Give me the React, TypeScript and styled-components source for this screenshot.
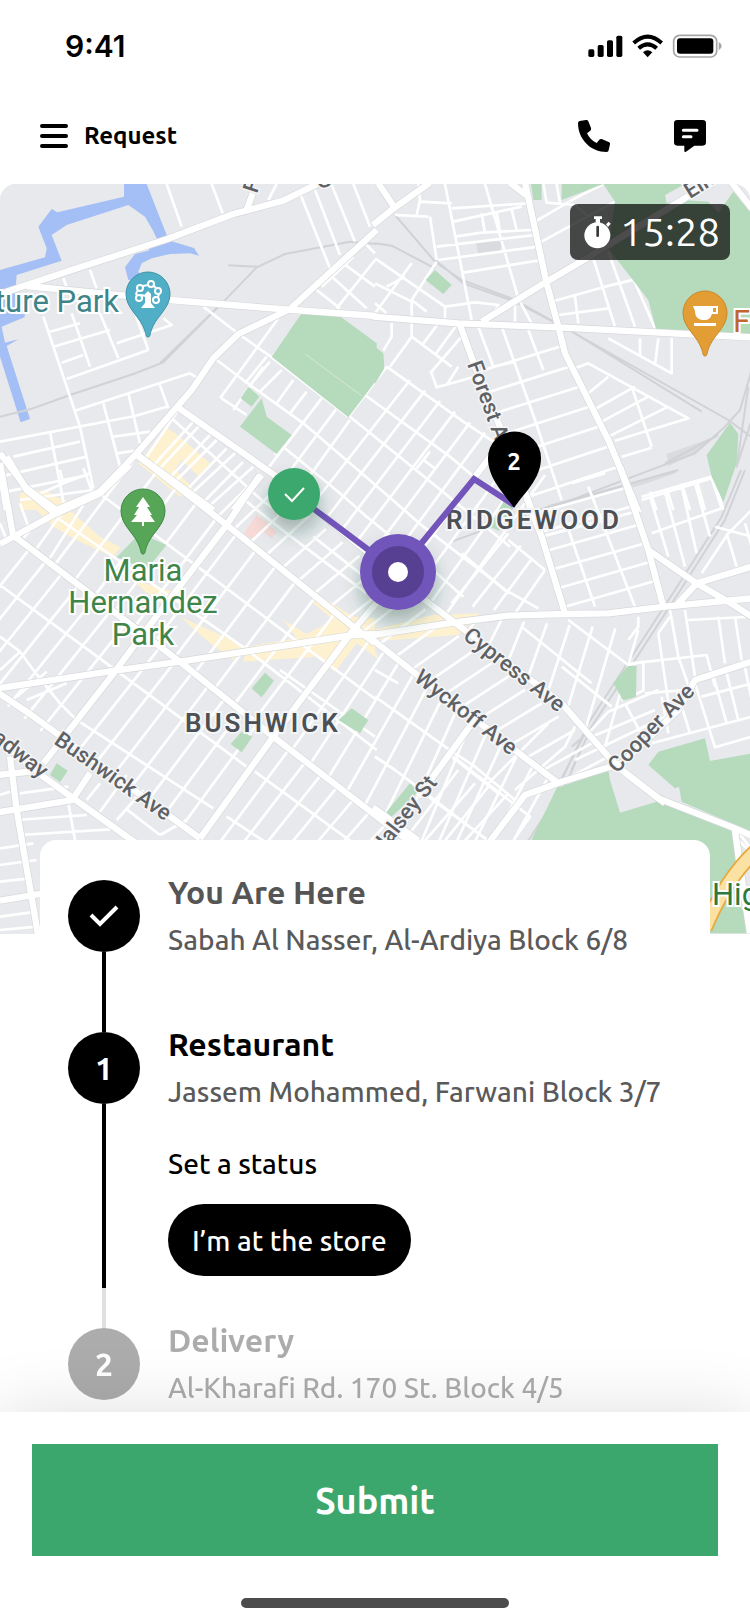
import React from 'react';
import styled, { createGlobalStyle } from 'styled-components';

const uiFont = '"Ubuntu", "Noto Sans", sans-serif';
const mapFont = 'Roboto, "Liberation Sans", sans-serif';

const weight = { text: 500, strong: 600 };

const GlobalStyle = createGlobalStyle`
  *, *::before, *::after { box-sizing: border-box; }
  body { margin: 0; background: #fff; color: #000; font-family: ${uiFont}; font-weight: ${weight.text}; }
  h2, p, ol { margin: 0; padding: 0; }
  button { border: 0; padding: 0; font-family: inherit; cursor: pointer; }
`;

/* ---------- page frame ---------- */

const Page = styled.div`
  display: flex;
  flex-direction: column;
  min-height: 100vh;
`;

const StatusBar = styled.div`
  display: flex;
  align-items: center;
  justify-content: space-between;
  height: 88px;
  padding: 4px 28px 0 65px;
`;

const Clock = styled.time`
  font: 600 30px/36px Inter, sans-serif;
`;

const Toolbar = styled.header`
  display: flex;
  align-items: center;
  height: 96px;
  padding: 0 44px 0 40px;
`;

const MenuButton = styled.button`
  display: flex;
  align-items: center;
  gap: 16px;
  margin-right: auto;
  background: none;
  color: #000;
  font-size: 24px;
  font-weight: ${weight.strong};
  line-height: 32px;
`;

const ToolbarActions = styled.div`
  display: flex;
  gap: 64px;
`;

const IconButton = styled.button`
  display: flex;
  background: none;
  color: #000;
`;

const Main = styled.main`
  flex: 1;
`;

/* ---------- map ---------- */

const MapPanel = styled.section`
  position: relative;
  height: 750px;
  border-radius: 16px 16px 0 0;
  overflow: hidden;
  background: #e7e9ec;
`;

const MapCanvas = styled.svg`
  display: block;
  width: 100%;
  height: 100%;
`;

const Timer = styled.div`
  position: absolute;
  top: 20px;
  right: 20px;
  display: flex;
  align-items: center;
  justify-content: center;
  gap: 8px;
  width: 160px;
  height: 56px;
  padding-left: 4px;
  border-radius: 8px;
  background: rgba(0, 0, 0, 0.7);
  color: #fff;
  font-size: 40px;
  font-weight: 400;
  line-height: 56px;
`;

const StreetLabel = styled.text`
  font: 500 22px ${mapFont};
  fill: #5f6164;
  stroke: #f4f5f6;
  stroke-width: 3px;
  paint-order: stroke;
`;

const DistrictLabel = styled.text`
  font: 600 26px ${mapFont};
  letter-spacing: 3px;
  fill: #4c4f53;
  stroke: #f4f5f6;
  stroke-width: 4px;
  paint-order: stroke;
`;

const PlaceLabel = styled.text<{ $color: string }>`
  font: 400 31px ${mapFont};
  fill: ${(p) => p.$color};
  stroke: #fff;
  stroke-width: 4px;
  paint-order: stroke;
`;

const PinNumber = styled.text`
  font: ${weight.strong} 24px ${uiFont};
  fill: #fff;
`;

type Edge = [number, number, number, number];

/** Parallel side streets that run from one avenue to the next. */
function ladder(a: Edge, b: Edge, count: number): string {
  let d = '';
  for (let i = 0; i <= count; i++) {
    const t = i / count;
    const x1 = Math.round(a[0] + (a[2] - a[0]) * t);
    const y1 = Math.round(a[1] + (a[3] - a[1]) * t);
    const x2 = Math.round(b[0] + (b[2] - b[0]) * t);
    const y2 = Math.round(b[1] + (b[3] - b[1]) * t);
    d += `M${x1},${y1}L${x2},${y2}`;
  }
  return d;
}

interface Tile {
  x: number;
  y: number;
  water?: string;
  parks?: string;
  shops?: string;
  clinic?: string;
  yard?: string;
  rail?: string;
  minor: string;
  major: string;
}

/* Terrain is stored at three units per pixel, one entry per map tile. */
const tiles: Tile[] = [
  {
    x: 0,
    y: -12,
    water:
      'M372,12H440L500,165 510,182 582,204 597,227 570,220 510,222 455,235 425,250 415,275 430,300 385,300 375,262 405,222 445,212 470,175 458,150 435,110 385,75 200,135 155,165 185,242 50,285 45,345 75,405 73,412 5,440 15,488 55,478 20,498 90,717 62,727 0,530V270L135,232 140,205 115,140 155,87 172,97 372,50Z',
    parks:
      'M905,400 1015,405 1130,490V600L1045,712 815,530ZM745,620 778,650 755,680 722,655ZM785,655 800,710 875,765 830,822 720,740Z',
    shops: 'M500,742 540,770 630,850 597,890 545,840 525,868 580,925 540,950 415,850ZM60,940 110,930 220,970 200,990H60Z',
    rail: 'M0,710 90,688 210,645 400,582 490,547 680,355 770,262 855,222 1050,185 1130,192M685,256 770,260M480,550 660,375',
    minor:
      'M500,12 545,140M635,12 668,100M805,60 830,12M900,40 990,265M945,30 1020,225M995,15 1065,185M1060,12 1110,140' +
      'M130,410 240,740 280,925M190,295 200,320M270,270 290,325M215,400 270,560M300,400 355,535M405,400 445,510' +
      'M150,455 240,430M160,500 330,450M185,548 250,525M200,597 445,510M350,490 515,435 490,415' +
      'M225,692 570,580 590,592M0,785 405,708 500,680M310,670 360,860M385,640 420,790M478,610 505,685M340,770 450,755M350,820 420,810' +
      'M150,755 195,990M40,830 240,785M0,890 260,830M20,935 265,885M60,960 280,930' +
      'M610,380 720,465 820,535 1045,710M650,540 750,615M665,655 740,705' +
      'M660,655 835,415M815,535 905,410M700,690 790,560M735,610 800,530M825,825 850,790' +
      'M440,830 535,690M480,865 600,735M530,900 650,780M575,940 705,820M620,985 760,860M515,715 790,965 830,990' +
      'M1030,250 1125,320M990,285 1100,385M950,330 1020,385M1010,385 1125,240M965,320 1060,230M1095,190 1125,220',
    major:
      'M0,342 60,322 240,262 500,178 700,102 850,62 955,10M80,318 250,335 510,360 840,387 1130,408M1130,150 1070,205 1000,268 870,387 715,462 640,535 575,630 410,820 300,935 170,990' +
      'M530,680 830,890 880,930M405,820 640,990M0,820 80,925 170,990M0,870 20,990M785,885 700,990M740,90 758,40',
  },
  {
    x: 1125,
    y: -12,
    parks:
      'M468,12H500V60H475ZM560,12H930L870,45 875,70 920,60 1000,65 1030,98 1075,35 1125,95V462L843,447 820,360 700,205 720,65 685,12 560,60ZM180,270 230,315 205,342 152,300ZM0,500 25,520 28,565 0,612ZM1065,728 1090,762 1085,850 1045,965 1010,890 995,825Z',
    yard: 'M875,822 1025,768 960,820 880,858ZM300,180 380,185 375,215 310,220Z',
    rail:
      'M60,105 180,245 260,300 410,355 600,460 980,695M180,240 265,310 420,365 590,455 1060,720 1130,772M0,190 50,197 180,265M1130,570 1095,690 1050,740 960,820 800,880 550,975M1120,620 1085,860 1130,720M870,850 1030,765',
    minor:
      'M130,12 135,60 125,105M60,105 160,110M135,65 230,70M165,110 185,240M210,12 290,420M330,12 430,355 475,440M230,85 460,70M235,125 440,80M240,170 320,158 470,150M185,200 480,165M190,240 490,200M265,278 500,240M320,100 330,160M365,95 375,155M410,90 425,150' +
      'M505,12 515,68 600,75M545,12 555,70M480,125 600,55 685,12M490,190 720,65M0,235 210,380 300,367 370,375 350,410M110,360 185,245M35,320 90,290M0,310 110,365 110,430M210,380V415M0,400 110,250M0,370 35,400M110,360 155,395M420,360V425' +
      'M540,362 690,320 780,298M600,350 610,430M550,405 700,385M655,235 720,440M700,215 780,440M735,205 840,445M600,75 640,110' +
      'M25,512 50,470V430M110,430V470L230,560M110,470 45,560M180,525 245,435M145,490 190,430M165,580 260,470M170,580 185,622 300,590M215,615 250,560' +
      'M310,440 355,560 420,545M380,440 480,720 560,960M460,450 505,570M770,620 830,800M690,880 590,910' +
      ladder([310, 575, 460, 950], [570, 495, 730, 860], 6) +
      'M600,565 640,550 940,715 720,782M640,640 700,590M655,690 780,620M670,730 820,650M690,775 875,682M740,830 830,803' +
      'M700,475 890,580V475M795,475V525M850,475 840,555M800,950 1015,888 1045,990M825,935 845,990M875,925 895,990M920,910 945,990M965,900 990,990',
    major:
      'M-6,135 60,82 165,8M10,10 60,85M405,8 460,50M450,8 515,310 550,440 570,520 700,780 790,995M-6,410 250,430 550,442 1130,472M320,425 515,305 640,232 950,42 1015,8M255,435 300,560 400,800 470,990M1070,8 1130,85M300,890 350,825 420,770',
  },
  {
    x: 750,
    y: 528,
    minor:
      'M0,75 160,190 330,335 520,500 780,700M105,265 270,400 350,470 560,640 640,710M300,170 560,380 780,560M345,105 600,290 780,440M410,20 640,185 730,245M190,530 330,640 420,700' +
      'M0,75 60,5M30,95 95,30M80,130 130,60M120,160 170,95M295,170 410,20M520,300 555,325M540,275 500,325' +
      ladder([50, 330, 140, 402], [215, 115, 300, 180], 2) +
      ladder([185, 438, 590, 760], [480, 60, 885, 345], 9),
    major: '',
  },
  {
    x: 0,
    y: 858,
    parks:
      'M420,190 500,225 440,300 350,262ZM795,608 822,632 785,682 755,655ZM725,785 757,800 725,847 692,822ZM1055,715 1105,750 1080,790 1015,750ZM170,880 203,902 180,937 150,915Z',
    shops:
      'M60,70 140,60 300,200 362,232 340,262 240,215 160,170ZM400,330 520,365 480,400 430,360ZM540,440 740,530 700,570 630,520ZM850,450 920,492 1000,450 940,400 960,378 1060,440 1125,445V560L1070,520 1005,605 950,560 730,575 740,530 890,505Z',
    clinic: 'M770,135 805,160 830,185 815,205 790,185 760,212 732,190Z',
    minor:
      'M160,135 735,535 1130,840M305,75 900,520 1130,690M0,345 340,595 740,890M0,500 60,545 100,600 180,700 240,760M0,600 60,545M80,690 200,640M50,680 140,605M60,215 115,155M100,250 185,130M140,280 250,105M190,40 180,0M100,80 190,40 270,10M0,160 20,210M250,-5 275,60M60,100 85,170M740,95 860,190 1100,370M840,600 1125,800' +
      ladder([160, 290, 820, 800], [407, -37, 1067, 473], 11) +
      ladder([-170, 560, 170, 820], [90, 235, 430, 495], 7) +
      ladder([170, 820, 600, 1105], [430, 495, 820, 800], 8) +
      ladder([600, 1105, 1000, 1400], [820, 800, 1255, 1137], 9) +
      ladder([410, -50, 1675, 940], [530, -185, 1825, 860], 26) +
      ladder([820, 800, 1255, 1137], [1067, 473, 1420, 740], 8) +
      ladder([1255, 1137, 1465, 1250], [1420, 740, 1640, 930], 5),
    major:
      'M0,222 160,135 300,70 390,-15M20,-40 80,60 165,130M0,-20 40,200M45,200 480,530 540,575 820,800 1125,1035 1260,1140M405,-50 680,165 1060,470 1125,520M780,15 680,165 400,530 345,605 130,880M-6,655 345,602 540,575 1060,495 1130,492M-6,668 90,732 170,790 600,1105M1270,235 1060,480 820,800 600,1105M830,20 1275,390',
  },
  {
    x: 1125,
    y: 858,
    parks:
      'M758,588H785L783,680 745,692 715,640ZM1015,0H1077L1045,95ZM385,95 415,115 372,182 345,170Z',
    shops: 'M0,480 170,435 315,430 250,495 20,512ZM0,540 15,575 0,560Z',
    yard: 'M520,105 800,30 900,0 905,8 800,45 530,118Z',
    rail: 'M1098,0 1040,140 900,360 640,760 560,930M1110,0 1050,150 910,370 650,770 590,900M230,215 520,110 910,0M630,790 560,925M660,770 590,830',
    minor:
      'M400,210 510,300M400,365 490,415M260,250 400,370' +
      ladder([230, 400, 420, 430], [400, 190, 510, 300], 3) +
      'M500,200 800,120M560,120 660,410M640,50 780,410' +
      ladder([480, 130, 570, 410], [765, 50, 850, 330], 5) +
      ladder([280, 480, 690, 830], [310, 445, 790, 480], 7) +
      'M580,450 760,585 805,575M560,590 710,710M440,470 650,640M790,440V470L760,510' +
      'M825,80 880,260M870,65 930,290M920,50 965,250M960,40 1005,200M800,90 1010,25 1040,115 830,190M1020,170 1130,200M1060,190 980,310M1055,190 1085,290M1110,160 1130,230M1060,190 1130,120' +
      'M885,420 910,560 945,660M930,420 960,620M850,490 885,730M850,490 885,440M940,450 1130,440M1030,440 1050,580M1080,440 1100,570M770,580 995,555 1020,650M805,580V662L740,692M810,670 930,660M640,790 700,725 850,660' +
      'M600,870 880,735M650,800 840,720M750,700 795,785M860,680 880,790M905,660 945,790M960,640 1020,832 1130,800M1010,600 1055,760M1050,590 1090,750M980,680 1130,640M830,820 1130,740M1105,570 1130,690' +
      'M0,680 210,830 300,890 420,990M0,860 60,900M230,860 370,970M0,600 70,640M340,940 520,760M420,960 570,830 600,770',
    major:
      'M-6,495 240,457 400,437 570,432 700,430 870,410 1130,385M150,390 560,700 700,860 740,900 870,1000M-6,510 120,610 550,940M455,85 500,200 570,430M735,-10 820,240 865,410M820,240 965,340 1060,395 1130,440M905,405 965,340 1130,290' +
      'M1130,575 960,630 910,720 740,880 560,935 450,975 340,1120M295,755 130,980',
  },
  {
    x: 0,
    y: 1608,
    minor:
      'M60,220 205,200M60,345 330,328M50,300 260,285M0,385 100,370M0,435 110,420M0,485 90,475M0,590 110,575M0,630 110,620M205,250 225,360M0,225 30,215M300,275 380,165M350,300 430,210M380,268 480,345M230,0 640,265M680,290 790,362M765,155 1050,362M480,345 560,300M260,240 300,190',
    major: 'M30,110 50,270 115,650M-6,165 90,155M-6,277 220,240M220,235 270,160M-20,45 130,170 220,235 430,385M0,542 130,520',
  },
  {
    x: 1125,
    y: 1608,
    parks:
      'M990,55 1005,123 1130,100V335L920,245 912,200 900,205 820,135 850,95ZM545,205 700,150 705,180 735,278 845,245 1070,325 1130,640H900V400H450ZM105,190 130,215 45,295 35,275Z',
    rail: 'M560,180 520,270 460,362M600,130 530,290 480,362',
    minor:
      'M0,110 60,150 330,355M235,110 465,290 420,355M160,230 340,362M100,345 250,150M150,362 300,190M210,362 340,200M270,362 400,220M1090,360 1130,400M1085,330 1130,390',
    major: 'M-6,262 130,362M740,150 850,235 1080,325 1130,347M1080,330 1092,420 1125,640',
  },
];

const layer = (key: keyof Tile) =>
  tiles.map((t) => (t[key] ? <path key={`${t.x}-${t.y}`} transform={`translate(${t.x} ${t.y})`} d={t[key] as string} /> : null));

const Terrain = () => (
  <g transform="scale(0.33333)" strokeLinejoin="round">
    <rect width="2250" height="2250" fill="#e7e9ec" />
    <g fill="#fdf1d0">{layer('shops')}</g>
    <g fill="#f7d9d6">{layer('clinic')}</g>
    <g fill="#d9dbdf">{layer('yard')}</g>
    <g fill="#a4bff5">{layer('water')}</g>
    <g fill="none" stroke="#d0d2d5" strokeWidth="6">{layer('rail')}</g>
    <g fill="none" stroke="#fff" strokeWidth="8">{layer('minor')}</g>
    <g fill="#b5dabc">{layer('parks')}</g>
    <g fill="none" stroke="#d6d8db" strokeWidth="23">{layer('major')}</g>
    <g fill="none" stroke="#fff" strokeWidth="19">{layer('major')}</g>
    <path d="M915,510 1085,635" stroke="#cde3d1" strokeWidth="4" />
    <g fill="none" transform="translate(1125 1608)">
      <path d="M990,625Q1050,480 1140,395" stroke="#e8a93f" strokeWidth="46" />
      <path d="M990,625Q1050,480 1140,395" stroke="#fbe1a2" strokeWidth="36" />
    </g>
  </g>
);

const pinPath = 'M0,43C-2,43 -2,41 -3,37C-7,23 -22,15 -22,0A22,22 0 0 1 22,0C22,15 7,23 3,37C2,41 2,43 0,43Z';

interface PoiProps {
  x: number;
  y: number;
  fill: string;
  edge: string;
  children: React.ReactNode;
}

const Poi = ({ x, y, fill, edge, children }: PoiProps) => (
  <g transform={`translate(${x} ${y})`}>
    <path d={pinPath} fill={fill} stroke={edge} strokeWidth="1" />
    {children}
  </g>
);

const RouteMap = () => (
  <MapCanvas viewBox="0 0 750 750" preserveAspectRatio="xMidYMid slice" role="img" aria-label="Route map">
    <defs>
      <filter id="markerShadow" x="-60%" y="-60%" width="220%" height="240%">
        <feDropShadow dx="0" dy="12" stdDeviation="9" floodColor="#1d4f3d" floodOpacity="0.35" />
      </filter>
    </defs>
    <Terrain />

    <StreetLabel transform="translate(467 180) rotate(70)">Forest Ave</StreetLabel>
    <StreetLabel transform="translate(413 496) rotate(38)">Wyckoff Ave</StreetLabel>
    <StreetLabel transform="translate(462 454) rotate(38)">Cypress Ave</StreetLabel>
    <StreetLabel transform="translate(617 590) rotate(-46)">Cooper Ave</StreetLabel>
    <StreetLabel transform="translate(438 599) rotate(-52)" textAnchor="end">Halsey St</StreetLabel>
    <StreetLabel transform="translate(53 559) rotate(35)">Bushwick Ave</StreetLabel>
    <StreetLabel transform="translate(41 595) rotate(38)" textAnchor="end">Broadway</StreetLabel>
    <StreetLabel transform="translate(690 15) rotate(-32)">Eliot</StreetLabel>
    <StreetLabel transform="translate(257 10) rotate(-72)">F</StreetLabel>
    <StreetLabel transform="translate(318 5) rotate(-14)">G</StreetLabel>
    <DistrictLabel x="185" y="548">BUSHWICK</DistrictLabel>
    <DistrictLabel x="446" y="345">RIDGEWOOD</DistrictLabel>

    <PlaceLabel $color="#3f8488" x="119" y="128" textAnchor="end">Nature Park</PlaceLabel>
    <PlaceLabel $color="#3f8549" textAnchor="middle">
      <tspan x="143" y="397">Maria</tspan>
      <tspan x="143" y="429">Hernandez</tspan>
      <tspan x="143" y="461">Park</tspan>
    </PlaceLabel>
    <PlaceLabel $color="#c0672f" x="733" y="148">F</PlaceLabel>
    <PlaceLabel $color="#2d7a3d" x="712" y="721">High</PlaceLabel>

    <Poi x={148} y={110} fill="#50afc6" edge="#3e93a8">
      <g fill="none" stroke="#fff" strokeWidth="2">
        <circle cx="-9" cy="4" r="3" />
        <circle cx="-8" cy="-6" r="3" />
        <circle cx="3" cy="-10" r="3" />
        <circle cx="10" cy="-3" r="3" />
        <circle cx="8" cy="6" r="3" />
        <path d="M-12,1 -11,-3M-5,-8 0,-9M6,-8 8,-6M11,0 10,3M-7,1 -2,2" />
      </g>
      <path d="M-3,0 0,-3 3,0V9L7,14H-7L-3,9Z" fill="#fff" />
    </Poi>
    <Poi x={143} y={327} fill="#57a657" edge="#418744">
      <path d="M0,-14 7,-4H4L9,4H7L12,11H1V15H-1V11H-12L-6,4H-9L-4,-4H-7Z" fill="#fff" />
    </Poi>
    <Poi x={705} y={129} fill="#e39d35" edge="#cb872b">
      <path d="M-12,-7H13V1H7Q5,7 0,7H-3Q-10,6 -10,-2ZM8,-5V-1H11V-5ZM-11,10H11V13H-11Z" fill="#fff" fillRule="evenodd" />
    </Poi>

    <path d="M294,310 398,388 474,295 514,321" fill="none" stroke="#7254ba" strokeWidth="6" />
    <g filter="url(#markerShadow)">
      <circle cx="294" cy="310" r="26" fill="#3ca86d" />
      <circle cx="398" cy="388" r="38" fill="#7254ba" />
    </g>
    <path d="M285,310 292,317 304,304" fill="none" stroke="#fff" strokeWidth="2" />
    <circle cx="398" cy="388" r="26" fill="#573f91" />
    <circle cx="398" cy="388" r="10" fill="#fff" />
    <path d="M514,324C504,309 488,295 488,274A26,26 0 0 1 541,274C541,295 524,309 514,324Z" />
    <PinNumber x="514" y="286" textAnchor="middle">2</PinNumber>
  </MapCanvas>
);

/* ---------- icons ---------- */

const StatusIcons = () => (
  <svg width="134" height="24" viewBox="638 101 402 72" aria-hidden="true">
    <rect x="639" y="147" width="18" height="23" rx="5" />
    <rect x="667" y="134" width="18" height="36" rx="5" />
    <rect x="695" y="120" width="18" height="50" rx="5" />
    <rect x="723" y="106" width="18" height="64" rx="5" />
    <g fill="none" stroke="#000" strokeWidth="12">
      <path d="M775,128Q817,90 859,128" />
      <path d="M790,144Q817,120 844,144" />
    </g>
    <path d="M803,156Q817,143 831,156L817,171Z" />
    <rect x="895" y="105" width="129" height="65" rx="18" fill="none" stroke="#a6a6a6" strokeWidth="5" />
    <rect x="905" y="114" width="109" height="46" rx="9" />
    <path d="M1030,125Q1039,129 1039,137T1030,150Z" fill="#a6a6a6" />
  </svg>
);

const MenuIcon = () => (
  <svg width="28" height="24" viewBox="0 0 28 24" aria-hidden="true">
    <path d="M2,2H26M2,12H26M2,22H26" stroke="#000" strokeWidth="4" strokeLinecap="round" />
  </svg>
);

const PhoneIcon = () => (
  <svg width="32" height="32" viewBox="0 0 96 96" aria-hidden="true">
    <path d="M5,3 24,0Q29,-1 31,4L39,24Q40,29 37,32L27,40C33,53 43,63 56,69L64,59Q67,56 71,57L92,66Q97,68 96,73L92,91Q91,96 86,96C38,96 0,58 0,9Q0,4 5,3Z" />
  </svg>
);

const ChatIcon = () => (
  <svg width="32" height="32" viewBox="0 0 96 96" aria-hidden="true">
    <path d="M10,0H86Q96,0 96,10V67Q96,77 86,77H61L36,95Q31,98 31,92V77H10Q0,77 0,67V10Q0,0 10,0Z" />
    <path d="M28,31H69M28,50H51" stroke="#fff" strokeWidth="9" strokeLinecap="round" />
  </svg>
);

const StopwatchIcon = () => (
  <svg width="28" height="34" viewBox="0 0 84 102" aria-hidden="true">
    <circle cx="40" cy="61" r="39" fill="#fff" />
    <path d="M30,4H54V12H48V26H35V12H30ZM66,28 74,20 80,26 72,36Z" fill="#fff" />
    <path d="M41,36V62" stroke="#333b35" strokeWidth="8" strokeLinecap="round" />
  </svg>
);

const CheckIcon = () => (
  <svg width="32" height="24" viewBox="0 0 32 24" aria-hidden="true">
    <path d="M3,11 12,20 29,3" fill="none" stroke="#fff" strokeWidth="4" />
  </svg>
);

/* ---------- delivery steps ---------- */

const Sheet = styled.section`
  position: relative;
  margin: -94px 40px 0;
  padding: 40px 28px 4px;
  border-radius: 16px 16px 0 0;
  background: #fff;
`;

const Steps = styled.ol`
  list-style: none;
`;

const Step = styled.li<{ $muted?: boolean }>`
  display: grid;
  grid-template-columns: 72px 1fr;
  column-gap: 28px;
  opacity: ${(p) => (p.$muted ? 0.32 : 1)};
`;

const Track = styled.div`
  display: flex;
  flex-direction: column;
  align-items: center;
`;

const Marker = styled.span`
  display: flex;
  align-items: center;
  justify-content: center;
  width: 72px;
  height: 72px;
  border-radius: 50%;
  background: #000;
  color: #fff;
  font-size: 32px;
  font-weight: ${weight.strong};
`;

const Connector = styled.span<{ $pending?: boolean }>`
  flex: ${(p) => (p.$pending ? '0 0 40px' : '1')};
  width: 4px;
  background: ${(p) => (p.$pending ? '#e0e0e0' : '#000')};
`;

const StepBody = styled.div<{ $gap: number }>`
  margin-top: -4px;
  padding-bottom: ${(p) => p.$gap}px;
`;

const StepTitle = styled.h2<{ $color?: string }>`
  color: ${(p) => p.$color || '#000'};
  font-size: 32px;
  font-weight: ${weight.strong};
  line-height: 32px;
`;

const Address = styled.p<{ $color?: string }>`
  margin-top: 12px;
  color: ${(p) => p.$color || '#5a5a5a'};
  font-size: 28px;
  line-height: 40px;
`;

const StatusPrompt = styled.p`
  margin-top: 32px;
  font-size: 28px;
  line-height: 40px;
`;

const StatusButton = styled.button`
  height: 72px;
  margin-top: 20px;
  padding: 0 24px;
  border-radius: 36px;
  background: #000;
  color: #fff;
  font-size: 28px;
  font-weight: ${weight.text};
`;

/* ---------- footer ---------- */

const Footer = styled.footer`
  position: sticky;
  bottom: 0;
  padding: 32px 32px 16px;
  background: #fff;
  box-shadow: 0 0 64px rgba(0, 0, 0, 0.13);
`;

const SubmitButton = styled.button`
  display: block;
  width: 100%;
  height: 112px;
  background: #3ca76d;
  color: #fff;
  font-size: 36px;
  font-weight: ${weight.strong};
`;

const HomeIndicator = styled.div`
  width: 268px;
  height: 10px;
  margin: 42px auto 0;
  border-radius: 5px;
  background: #4c4c4c;
`;

export default function App() {
  return (
    <Page>
      <GlobalStyle />
      <StatusBar>
        <Clock>9:41</Clock>
        <StatusIcons />
      </StatusBar>
      <Toolbar>
        <MenuButton type="button">
          <MenuIcon />
          Request
        </MenuButton>
        <ToolbarActions>
          <IconButton type="button" aria-label="Call">
            <PhoneIcon />
          </IconButton>
          <IconButton type="button" aria-label="Message">
            <ChatIcon />
          </IconButton>
        </ToolbarActions>
      </Toolbar>
      <Main>
        <MapPanel>
          <RouteMap />
          <Timer>
            <StopwatchIcon />
            15:28
          </Timer>
        </MapPanel>
        <Sheet>
          <Steps>
            <Step>
              <Track>
                <Marker>
                  <CheckIcon />
                </Marker>
                <Connector />
              </Track>
              <StepBody $gap={72}>
                <StepTitle $color="#555">You Are Here</StepTitle>
                <Address>Sabah Al Nasser, Al-Ardiya Block 6/8</Address>
              </StepBody>
            </Step>
            <Step>
              <Track>
                <Marker>1</Marker>
                <Connector />
                <Connector $pending />
              </Track>
              <StepBody $gap={52}>
                <StepTitle>Restaurant</StepTitle>
                <Address>Jassem Mohammed, Farwani Block 3/7</Address>
                <StatusPrompt>Set a status</StatusPrompt>
                <StatusButton type="button">I’m at the store</StatusButton>
              </StepBody>
            </Step>
            <Step $muted>
              <Track>
                <Marker>2</Marker>
              </Track>
              <StepBody $gap={0}>
                <StepTitle>Delivery</StepTitle>
                <Address $color="#000">Al-Kharafi Rd. 170 St. Block 4/5</Address>
              </StepBody>
            </Step>
          </Steps>
        </Sheet>
      </Main>
      <Footer>
        <SubmitButton type="submit">Submit</SubmitButton>
        <HomeIndicator />
      </Footer>
    </Page>
  );
}
